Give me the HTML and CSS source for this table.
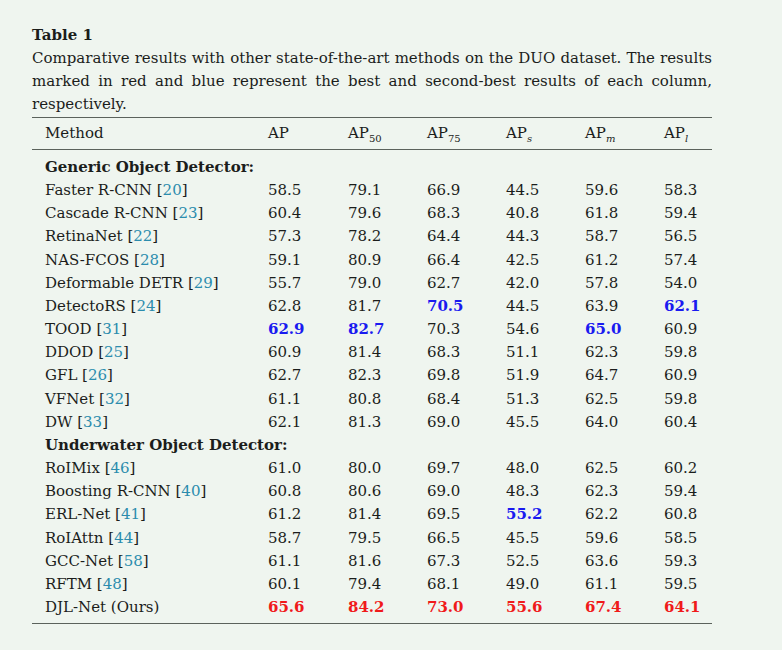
FILE: index.html
```html
<!DOCTYPE html>
<html lang="en">
<head>
<meta charset="utf-8">
<title>Table 1</title>
<link rel="stylesheet" href="styles.css">
</head>
<body>
<div class="figure">
  <div class="title">Table 1</div>
  <p class="caption">Comparative results with other state-of-the-art methods on the DUO dataset. The results marked in red and blue represent the best and second-best results of each column, respectively.</p>
  <table class="results">
    <colgroup>
      <col class="c-method"><col class="c-num1"><col class="c-num"><col class="c-num"><col class="c-num"><col class="c-num"><col class="c-last">
    </colgroup>
    <thead>
      <tr>
        <th class="method">Method</th>
        <th>AP</th>
        <th>AP<sub>50</sub></th>
        <th>AP<sub>75</sub></th>
        <th>AP<sub class="it">s</sub></th>
        <th>AP<sub class="it">m</sub></th>
        <th>AP<sub class="it">l</sub></th>
      </tr>
    </thead>
    <tbody>
      <tr class="first"><td class="method group" colspan="7">Generic Object Detector:</td></tr>
      <tr><td class="method">Faster R-CNN [<span class="ref">20</span>]</td><td>58.5</td><td>79.1</td><td>66.9</td><td>44.5</td><td>59.6</td><td>58.3</td></tr>
      <tr><td class="method">Cascade R-CNN [<span class="ref">23</span>]</td><td>60.4</td><td>79.6</td><td>68.3</td><td>40.8</td><td>61.8</td><td>59.4</td></tr>
      <tr><td class="method">RetinaNet [<span class="ref">22</span>]</td><td>57.3</td><td>78.2</td><td>64.4</td><td>44.3</td><td>58.7</td><td>56.5</td></tr>
      <tr><td class="method">NAS-FCOS [<span class="ref">28</span>]</td><td>59.1</td><td>80.9</td><td>66.4</td><td>42.5</td><td>61.2</td><td>57.4</td></tr>
      <tr><td class="method">Deformable DETR [<span class="ref">29</span>]</td><td>55.7</td><td>79.0</td><td>62.7</td><td>42.0</td><td>57.8</td><td>54.0</td></tr>
      <tr><td class="method">DetectoRS [<span class="ref">24</span>]</td><td>62.8</td><td>81.7</td><td class="second">70.5</td><td>44.5</td><td>63.9</td><td class="second">62.1</td></tr>
      <tr><td class="method">TOOD [<span class="ref">31</span>]</td><td class="second">62.9</td><td class="second">82.7</td><td>70.3</td><td>54.6</td><td class="second">65.0</td><td>60.9</td></tr>
      <tr><td class="method">DDOD [<span class="ref">25</span>]</td><td>60.9</td><td>81.4</td><td>68.3</td><td>51.1</td><td>62.3</td><td>59.8</td></tr>
      <tr><td class="method">GFL [<span class="ref">26</span>]</td><td>62.7</td><td>82.3</td><td>69.8</td><td>51.9</td><td>64.7</td><td>60.9</td></tr>
      <tr><td class="method">VFNet [<span class="ref">32</span>]</td><td>61.1</td><td>80.8</td><td>68.4</td><td>51.3</td><td>62.5</td><td>59.8</td></tr>
      <tr><td class="method">DW [<span class="ref">33</span>]</td><td>62.1</td><td>81.3</td><td>69.0</td><td>45.5</td><td>64.0</td><td>60.4</td></tr>
      <tr><td class="method group" colspan="7">Underwater Object Detector:</td></tr>
      <tr><td class="method">RoIMix [<span class="ref">46</span>]</td><td>61.0</td><td>80.0</td><td>69.7</td><td>48.0</td><td>62.5</td><td>60.2</td></tr>
      <tr><td class="method">Boosting R-CNN [<span class="ref">40</span>]</td><td>60.8</td><td>80.6</td><td>69.0</td><td>48.3</td><td>62.3</td><td>59.4</td></tr>
      <tr><td class="method">ERL-Net [<span class="ref">41</span>]</td><td>61.2</td><td>81.4</td><td>69.5</td><td class="second">55.2</td><td>62.2</td><td>60.8</td></tr>
      <tr><td class="method">RoIAttn [<span class="ref">44</span>]</td><td>58.7</td><td>79.5</td><td>66.5</td><td>45.5</td><td>59.6</td><td>58.5</td></tr>
      <tr><td class="method">GCC-Net [<span class="ref">58</span>]</td><td>61.1</td><td>81.6</td><td>67.3</td><td>52.5</td><td>63.6</td><td>59.3</td></tr>
      <tr><td class="method">RFTM [<span class="ref">48</span>]</td><td>60.1</td><td>79.4</td><td>68.1</td><td>49.0</td><td>61.1</td><td>59.5</td></tr>
      <tr class="last"><td class="method">DJL-Net (Ours)</td><td class="best">65.6</td><td class="best">84.2</td><td class="best">73.0</td><td class="best">55.6</td><td class="best">67.4</td><td class="best">64.1</td></tr>
    </tbody>
  </table>
</div>
</body>
</html>
```

FILE: styles.css
```css
html, body {
  margin: 0;
  padding: 0;
  background: #eff5ef;
}

body {
  font-family: "DejaVu Serif", "Liberation Serif", serif;
  font-size: 15px;
  color: #1b1d1b;
}

.figure {
  width: 680px;
  padding: 24px 0 0 32px;
}

.title {
  font-weight: bold;
  line-height: 23px;
}

.caption {
  margin: 0;
  line-height: 23px;
  text-align: justify;
}

.results {
  width: 680px;
  margin-top: 1px;
  border-collapse: collapse;
  table-layout: fixed;
  border-top: 1.6px solid #5b625c;
  border-bottom: 1.6px solid #5b625c;
}

.c-method { width: 236px; }
.c-num1 { width: 80px; }
.c-num { width: 79px; }
.c-last { width: 48px; }

.results th,
.results td {
  padding: 0;
  text-align: left;
  white-space: nowrap;
  font-weight: normal;
  vertical-align: middle;
}

.results thead th {
  height: 31px;
  line-height: 31px;
  border-bottom: 1.6px solid #5b625c;
}

.results tbody td {
  height: 23.16px;
  line-height: 23.16px;
}

.results .method {
  padding-left: 13px;
}

.results .group {
  font-weight: bold;
}

.results tr.first td {
  padding-top: 6px;
}

.results tr.last td {
  padding-bottom: 4px;
}

sub {
  font-size: 10px;
  line-height: 0;
  vertical-align: -4px;
}

sub.it {
  font-style: italic;
}

.ref {
  color: #2b8cad;
}

.results td.second {
  color: #1a1af0;
  font-weight: bold;
}

.results td.best {
  color: #f01a1a;
  font-weight: bold;
}
```
